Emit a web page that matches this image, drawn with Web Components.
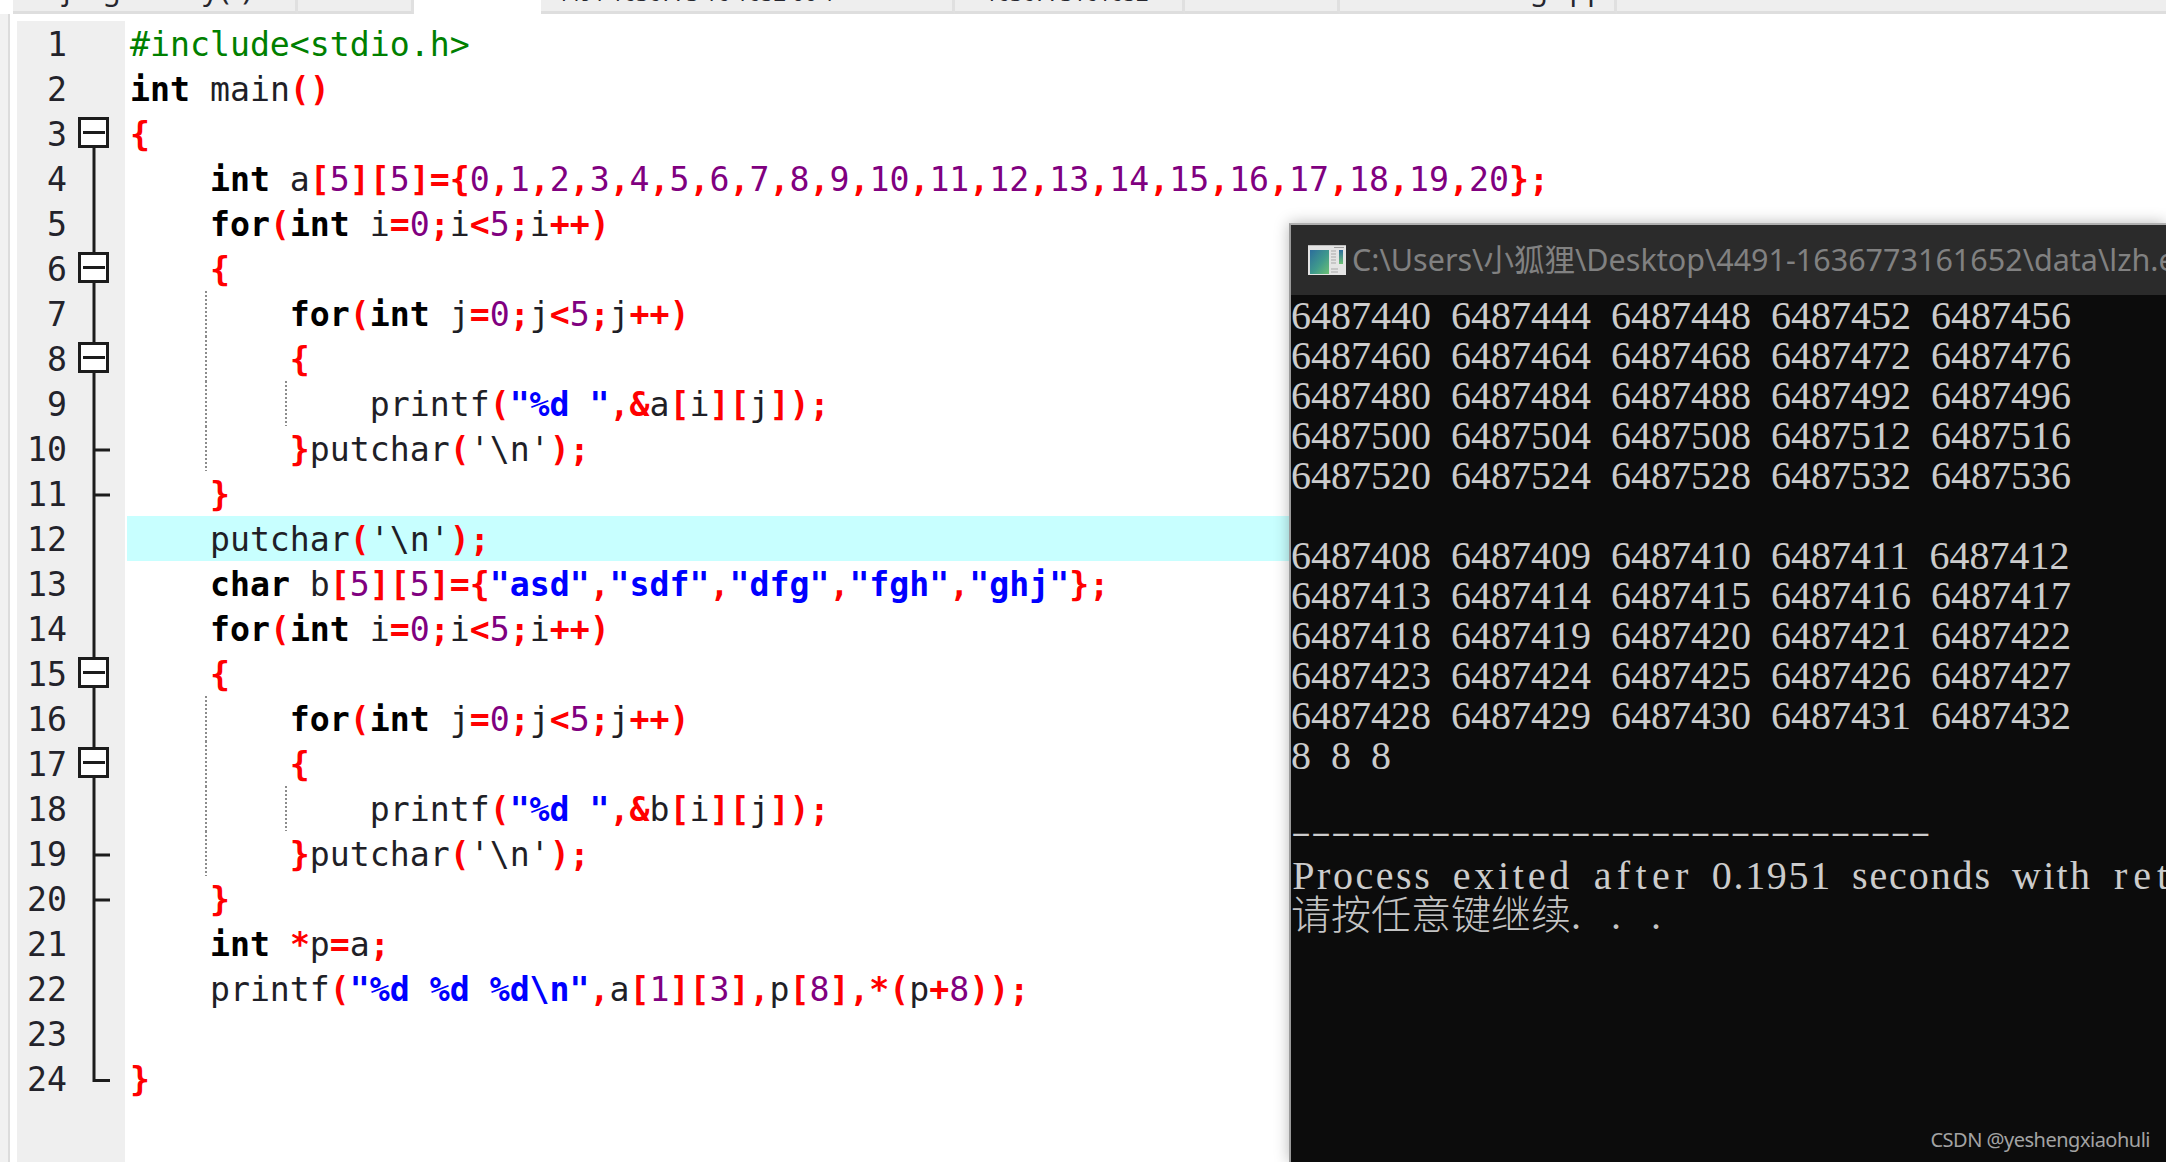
<!DOCTYPE html>
<html lang="zh">
<head>
<meta charset="utf-8">
<title>Dev-C++</title>
<style>
  html, body { margin: 0; height: 100%; background: #fff; overflow: hidden; }
</style>
</head>
<body>
<ide-screen>
  <tab-bar>
    <tab-item style="width:285px" pad="50" spaced>jiegou.try( )</tab-item>
    <tab-item style="width:116px"></tab-item>
    <tab-gap style="width:127px"></tab-gap>
    <tab-item style="width:414px" pad="14" low>4491 1636773 16 1652 00 1</tab-item>
    <tab-item style="width:230px" pad="30" low>1636773161652</tab-item>
    <tab-item style="width:155px"></tab-item>
    <tab-item style="width:277px" pad="190">g.cpp</tab-item>
    <tab-item style="flex:1"></tab-item>
  </tab-bar>
  <code-editor>
    <code-row n="1">#include&lt;stdio.h&gt;</code-row>
    <code-row n="2">int main()</code-row>
    <code-row n="3" fold="root">{</code-row>
    <code-row n="4" fold="line">    int a[5][5]={0,1,2,3,4,5,6,7,8,9,10,11,12,13,14,15,16,17,18,19,20};</code-row>
    <code-row n="5" fold="line">    for(int i=0;i&lt;5;i++)</code-row>
    <code-row n="6" fold="box">    {</code-row>
    <code-row n="7" fold="line" guides="1">        for(int j=0;j&lt;5;j++)</code-row>
    <code-row n="8" fold="box" guides="1">        {</code-row>
    <code-row n="9" fold="line" guides="2">            printf("%d ",&amp;a[i][j]);</code-row>
    <code-row n="10" fold="stub" guides="1">        }putchar('\n');</code-row>
    <code-row n="11" fold="stub">    }</code-row>
    <code-row n="12" fold="line" active>    putchar('\n');</code-row>
    <code-row n="13" fold="line">    char b[5][5]={"asd","sdf","dfg","fgh","ghj"};</code-row>
    <code-row n="14" fold="line">    for(int i=0;i&lt;5;i++)</code-row>
    <code-row n="15" fold="box">    {</code-row>
    <code-row n="16" fold="line" guides="1">        for(int j=0;j&lt;5;j++)</code-row>
    <code-row n="17" fold="box" guides="1">        {</code-row>
    <code-row n="18" fold="line" guides="2">            printf("%d ",&amp;b[i][j]);</code-row>
    <code-row n="19" fold="stub" guides="1">        }putchar('\n');</code-row>
    <code-row n="20" fold="stub">    }</code-row>
    <code-row n="21" fold="line">    int *p=a;</code-row>
    <code-row n="22" fold="line">    printf("%d %d %d\n",a[1][3],p[8],*(p+8));</code-row>
    <code-row n="23" fold="line"></code-row>
    <code-row n="24" fold="end">}</code-row>
    <code-row filler></code-row>
  </code-editor>
  <console-window title-text="C:\Users\小狐狸\Desktop\4491-1636773161652\data\lzh.exe">
    <console-line>6487440 6487444 6487448 6487452 6487456</console-line>
    <console-line>6487460 6487464 6487468 6487472 6487476</console-line>
    <console-line>6487480 6487484 6487488 6487492 6487496</console-line>
    <console-line>6487500 6487504 6487508 6487512 6487516</console-line>
    <console-line>6487520 6487524 6487528 6487532 6487536</console-line>
    <console-line></console-line>
    <console-line>6487408 6487409 6487410 6487411 6487412</console-line>
    <console-line>6487413 6487414 6487415 6487416 6487417</console-line>
    <console-line>6487418 6487419 6487420 6487421 6487422</console-line>
    <console-line>6487423 6487424 6487425 6487426 6487427</console-line>
    <console-line>6487428 6487429 6487430 6487431 6487432</console-line>
    <console-line>8 8 8</console-line>
    <console-line></console-line>
    <console-line rule>--------------------------------</console-line>
    <console-line spread>Process exited after 0.1951 seconds with ret</console-line>
    <console-line cjk>请按任意键继续. . .</console-line>
  </console-window>
  <water-mark>CSDN @yeshengxiaohuli</water-mark>
</ide-screen>

<script>
class IdeScreen extends HTMLElement {
  constructor() {
    super();
    this.attachShadow({mode: 'open'});
    this.shadowRoot.innerHTML = `
      <style>
        :host { display: flex; flex-direction: column; position: relative; height: 1162px; overflow: hidden; background: #fff; }
      </style>
      <slot></slot>`;
  }
}

class TabBar extends HTMLElement {
  constructor() {
    super();
    this.attachShadow({mode: 'open'});
    this.shadowRoot.innerHTML = `
      <style>
        :host { display: flex; height: 14px; padding-left: 13px; flex: none; }
      </style>
      <slot></slot>`;
  }
}

class TabGap extends HTMLElement {
  constructor() {
    super();
    this.attachShadow({mode: 'open'});
    this.shadowRoot.innerHTML = `<style>:host { display: block; flex: none; }</style>`;
  }
}

class TabItem extends HTMLElement {
  constructor() {
    super();
    this.attachShadow({mode: 'open'});
    this.shadowRoot.innerHTML = `
      <style>
        :host {
          display: block; box-sizing: border-box; height: 14px; flex: none; overflow: hidden;
          background: #eeeeee; border-bottom: 3px solid #dedede; border-right: 3px solid #e0e0e0;
        }
        :host(:last-child) { border-right: 0; }
        .label {
          display: block; white-space: pre; height: 28px; margin-top: -25px;
          font: 29px/28px "Noto Sans", sans-serif; color: #26262e;
        }
        :host([spaced]) .label { letter-spacing: 2.8px; }
        :host([low]) .label { margin-top: -22px; font-size: 22px; }
      </style>
      <span class="label"><slot></slot></span>`;
  }
  connectedCallback() {
    this.shadowRoot.querySelector('.label').style.paddingLeft = (this.getAttribute('pad') || 0) + 'px';
  }
}

class CodeEditor extends HTMLElement {
  constructor() {
    super();
    this.attachShadow({mode: 'open'});
    this.shadowRoot.innerHTML = `
      <style>
        :host {
          display: flex; flex-direction: column; flex: 1; min-height: 0; box-sizing: border-box;
          margin-left: 8px; padding: 7px 0 0 7px;
          border-left: 2px solid #dcdcdc;
          box-shadow: -8px 0 0 #f1f1f1;
        }
      </style>
      <slot></slot>`;
  }
}

// draws the fold column for one row, all rows share the same 57x45 box
function foldSvg(kind) {
  var stroke = 'stroke="#1c1c1c" stroke-width="3" fill="none"';
  var p = '';
  if (kind == 'line') p = `<path d="M26 0V45" ${stroke}/>`;
  if (kind == 'stub') p = `<path d="M26 0V45M26 24H42" ${stroke}/>`;
  if (kind == 'end') p = `<path d="M26 0V24.5H42" ${stroke}/>`;
  if (kind == 'root' || kind == 'box') {
    p = `<path d="M26 ${kind == 'root' ? 36 : 0}V45" ${stroke}/>
      <rect x="11.5" y="7.5" width="28" height="28" fill="#fff" stroke="#1c1c1c" stroke-width="3"/>
      <path d="M15 21.5H37" ${stroke}/>`;
  }
  return `<svg width="57" height="45" viewBox="0 0 57 45" aria-hidden="true">${p}</svg>`;
}

class CodeRow extends HTMLElement {
  constructor() {
    super();
    this.attachShadow({mode: 'open'});
    this.shadowRoot.innerHTML = `
      <style>
        :host { display: flex; height: 45px; flex: none; }
        :host([filler]) { flex: 1; height: auto; }
        .gutter { display: flex; width: 108px; flex: none; background: #efefef; }
        .num {
          width: 50px; margin-right: 1px; box-sizing: border-box; text-align: right;
          font: 33.2px/47px "DejaVu Sans Mono", monospace; color: #23232b; height: 45px;
        }
        svg { display: block; }
        .code {
          flex: 1; margin-left: 2px; padding-left: 3px; height: 100%; white-space: pre; overflow: visible;
          font: 33.2px/47px "DejaVu Sans Mono", monospace; color: #1f1f27;
        }
        :host([active]) .code { background-color: #c8ffff; }
        :host([guides]) .code {
          background-image: linear-gradient(#8c8c8c 60%, transparent 60%);
          background-size: 2px 4px; background-repeat: repeat-y; background-position: 78px 0;
        }
        :host([guides="2"]) .code {
          background-image: linear-gradient(#8c8c8c 60%, transparent 60%), linear-gradient(#8c8c8c 60%, transparent 60%);
          background-size: 2px 4px, 2px 4px; background-repeat: repeat-y, repeat-y; background-position: 78px 0, 158px 0;
        }
        ::slotted(.inc) { color: #008000; }
        ::slotted(.kw) { font-weight: 700; color: #000; }
        ::slotted(.str) { font-weight: 700; color: #0000ff; }
        ::slotted(.num) { color: #800080; }
        ::slotted(.sym) { font-weight: 700; color: #ff0000; }
      </style>
      <div class="gutter"><span class="num"></span><span class="fold"></span></div>
      <div class="code"><slot></slot></div>`;
  }

  connectedCallback() {
    this.shadowRoot.querySelector('.num').textContent = this.getAttribute('n') || '';
    this.shadowRoot.querySelector('.fold').innerHTML = foldSvg(this.getAttribute('fold'));
    this.colorize();
  }

  colorize() {
    var text = this.textContent;
    if (!text) return;
    this.textContent = '';
    var re = /(#include<[^>]*>)|("(?:[^"\\]|\\.)*")|('(?:[^'\\]|\\.)*')|\b(int|char|for)\b|\b(\d+)\b|([()\[\]{}=;,<>+*&]+)|([^"'()\[\]{}=;,<>+*&\d]+?(?=\b(?:int|char|for)\b|["'()\[\]{}=;,<>+*&]|$)|\d)/g;
    var m;
    while ((m = re.exec(text))) {
      var kind = m[1] ? 'inc' : m[2] ? 'str' : m[4] ? 'kw' : m[5] ? 'num' : m[6] ? 'sym' : '';
      if (kind) {
        var s = document.createElement('span');
        s.className = kind;
        s.textContent = m[0];
        this.appendChild(s);
      } else {
        this.appendChild(document.createTextNode(m[0]));
      }
    }
  }
}

class ConsoleWindow extends HTMLElement {
  constructor() {
    super();
    this.attachShadow({mode: 'open'});
    this.shadowRoot.innerHTML = `
      <style>
        :host {
          display: flex; flex-direction: column; position: absolute; left: 1289px; top: 223px; right: 0; bottom: 0;
          border-left: 2px solid #9a9a9a; border-top: 2px solid #b0b0b0;
          background: #0c0c0c; box-shadow: 0 0 14px rgba(0,0,0,.28); overflow: hidden;
        }
        .title {
          display: flex; align-items: center; gap: 6px; height: 70px; flex: none; box-sizing: border-box;
          padding: 0 0 3px 17px; background: #2b2b2b; white-space: nowrap;
          font: 30.5px/36px "Noto Sans", "Noto Sans CJK SC", sans-serif; color: #818181;
        }
        svg { flex: none; display: block; margin-top: 3px; }
      </style>
      <div class="title">
        <svg width="38" height="30" viewBox="0 0 38 30" aria-hidden="true">
          <defs>
            <linearGradient id="g1" x1="0" y1="0" x2="1" y2="1">
              <stop offset="0" stop-color="#2c6d9c"/><stop offset=".55" stop-color="#3f9a8c"/><stop offset="1" stop-color="#6cc074"/>
            </linearGradient>
            <linearGradient id="g2" x1="0" y1="0" x2="0" y2="1">
              <stop offset="0" stop-color="#2c6d9c"/><stop offset="1" stop-color="#6cc074"/>
            </linearGradient>
          </defs>
          <rect width="38" height="30" fill="#e4e4e4"/>
          <rect x="0" y="0" width="38" height="1" fill="#bdbdbd"/>
          <rect x="2" y="5" width="19" height="24" fill="url(#g1)"/>
          <rect x="31" y="5" width="4" height="14" fill="url(#g2)"/>
          <path d="M23 6H28M23 9H28M23 12H28M23 15H28M23 18H28M23 24H30M23 27H30" stroke="#a9a9a9" stroke-width="1"/>
          <path d="M26 2.5H36" stroke="#9c9c9c" stroke-width="1"/>
        </svg>
        <span class="text"></span>
      </div>
      <slot></slot>`;
  }
  connectedCallback() {
    this.shadowRoot.querySelector('.text').textContent = this.getAttribute('title-text');
  }
}

class ConsoleLine extends HTMLElement {
  constructor() {
    super();
    this.attachShadow({mode: 'open'});
    this.shadowRoot.innerHTML = `<style>
        :host {
          display: block; height: 40px; flex: none; color: #cccccc;
          font: 40px/42px "Liberation Serif", serif; word-spacing: 10px;
        }
        .in { display: block; white-space: pre; }
        :host([rule]) .in {
          font-size: 60px; word-spacing: 0; line-height: 40px;
          transform: translateY(-3px) scaleY(.5); transform-origin: 0 50%;
        }
        :host([cjk]) { font: 300 40px/35px "Noto Sans CJK SC", sans-serif; word-spacing: 0; color: #c4c4c4; }
        ::slotted(.w) { display: inline-block; }
        ::slotted(.dots) { font: 40px/35px "Liberation Serif", serif; word-spacing: 0; letter-spacing: 10px; }
      </style><span class="in"><slot></slot></span>`;
  }
  connectedCallback() {
    if (this.hasAttribute('spread')) this.spreadWords();
    if (this.hasAttribute('cjk')) this.splitDots();
  }
  // the real console is fixed pitch (20px a cell), so stretch each word to its cells
  spreadWords() {
    var words = this.textContent.split(' ');
    this.textContent = '';
    var self = this;
    words.forEach(function (w, i) {
      var s = document.createElement('span');
      s.className = 'w';
      s.textContent = w;
      self.appendChild(s);
      var extra = (w.length * 20 - s.getBoundingClientRect().width) / w.length;
      s.style.letterSpacing = extra + 'px';
      s.style.paddingLeft = extra / 2 + 'px';
      s.style.width = w.length * 20 + 'px';
      s.style.boxSizing = 'border-box';
      if (i < words.length - 1) self.appendChild(document.createTextNode(' '));
    });
  }
  splitDots() {
    var parts = this.textContent.split('. . .');
    this.textContent = parts[0];
    var s = document.createElement('span');
    s.className = 'dots';
    s.textContent = '. . .';
    this.appendChild(s);
  }
}

class WaterMark extends HTMLElement {
  constructor() {
    super();
    this.attachShadow({mode: 'open'});
    this.shadowRoot.innerHTML = `
      <style>
        :host {
          display: block; position: absolute; right: 16px; bottom: 10px; white-space: nowrap;
          font: 20px/24px "Noto Sans", sans-serif; letter-spacing: -.5px; color: #a3a3a3;
        }
      </style>
      <slot></slot>`;
  }
}

customElements.define('ide-screen', IdeScreen);
customElements.define('tab-bar', TabBar);
customElements.define('tab-gap', TabGap);
customElements.define('tab-item', TabItem);
customElements.define('code-editor', CodeEditor);
customElements.define('code-row', CodeRow);
customElements.define('console-window', ConsoleWindow);
customElements.define('console-line', ConsoleLine);
customElements.define('water-mark', WaterMark);
</script>
</body>
</html>
